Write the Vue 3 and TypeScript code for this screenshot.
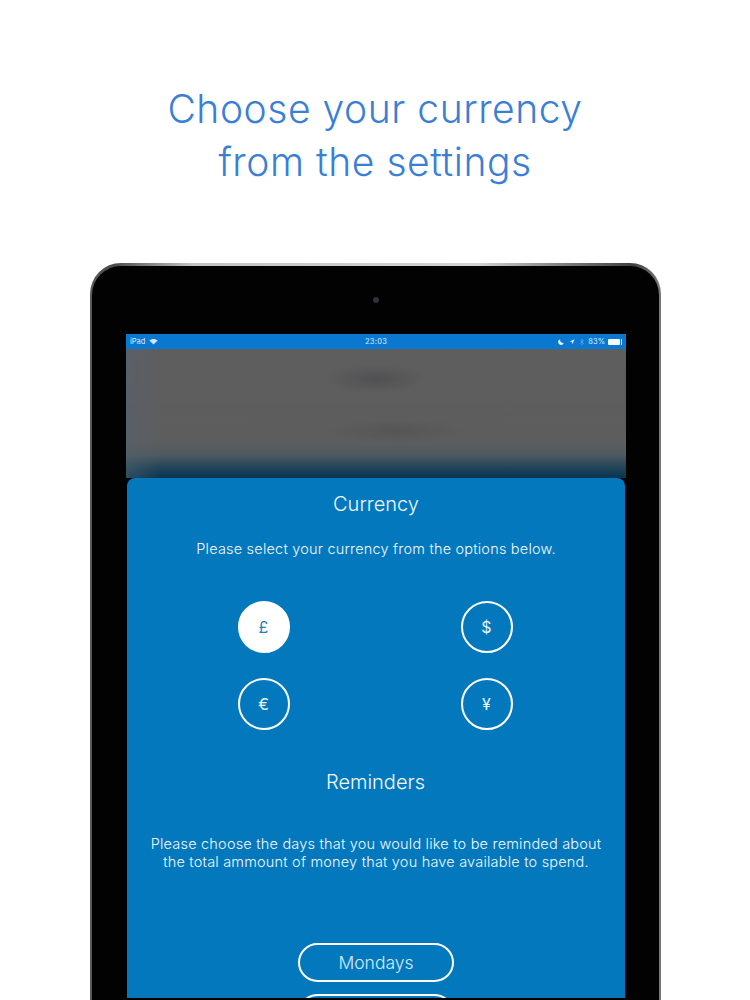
<script setup lang="ts">
const currencies = [
  { symbol: '£', active: true },
  { symbol: '$', active: false },
  { symbol: '€', active: false },
  { symbol: '¥', active: false },
]
</script>

<template>
  <main class="page">
    <h1 class="title">Choose your currency<br />from the settings</h1>
    <div class="device">
      <div class="bezel">
        <span class="camera"></span>
        <div class="screen">
          <div class="status">
            <div class="status-left">
              <span>iPad</span>
              <svg class="wifi" viewBox="0 0 12 9" aria-hidden="true">
                <path d="M6 8.6 0.4 3.2C3.6 0.3 8.4 0.3 11.6 3.2Z" fill="#cfe6f8" />
              </svg>
            </div>
            <span class="clock">23:03</span>
            <div class="status-right">
              <svg class="moon" viewBox="0 0 8 8" aria-hidden="true">
                <path d="M3 .4A3.8 3.8 0 1 0 7.6 5 3.6 3.6 0 0 1 3 .4Z" fill="#e8f3fc" />
              </svg>
              <svg class="arrow" viewBox="0 0 8 8" aria-hidden="true">
                <path d="M7.6.4 .4 3.6H4V7.4Z" fill="#e8f3fc" />
              </svg>
              <svg class="bt" viewBox="0 0 6 10" aria-hidden="true">
                <path d="M.6 2.8 5 6.8 3 9V1L5 3.2.6 7.2" fill="none" stroke="#7fb8e6" stroke-width=".8" />
              </svg>
              <span>83%</span>
              <span class="battery"><span class="charge"></span></span>
            </div>
          </div>
          <div class="backdrop"></div>
          <section class="sheet">
            <h2 class="heading">Currency</h2>
            <p class="copy">Please select your currency from the options below.</p>
            <div class="currencies">
              <button
                v-for="c in currencies"
                :key="c.symbol"
                class="currency"
                :class="{ active: c.active }"
                type="button"
              >{{ c.symbol }}</button>
            </div>
            <h2 class="heading reminders">Reminders</h2>
            <p class="copy long">Please choose the days that you would like to be reminded about<br />the total ammount of money that you have available to spend.</p>
            <button class="day" type="button">Mondays</button>
            <button class="day next" type="button" aria-hidden="true"></button>
          </section>
        </div>
      </div>
    </div>
  </main>
</template>

<style scoped>
.page {
  width: 750px;
  height: 1000px;
  overflow: hidden;
  background: #fff;
  font-family: Inter, "Liberation Sans", sans-serif;
  font-weight: 300;
}
.title {
  margin: 0;
  padding-top: 82px;
  height: 263px;
  box-sizing: border-box;
  text-align: center;
  color: #3a7fd5;
  font-size: 39px;
  line-height: 53px;
  font-weight: 300;
  letter-spacing: 0.55px;
}
.device {
  width: 571px;
  height: 800px;
  margin-left: 90px;
  box-sizing: border-box;
  padding: 3px 2px 0;
  background: linear-gradient(to right, #5c5c5e 0, #4a4a4c 4%, #c4c4c6 18%, #d2d2d4 68%, #77777a 84%, #3f3f41 95%, #7a7a7c 100%);
  border-radius: 31px 31px 0 0;
}
.bezel {
  position: relative;
  height: 100%;
  box-sizing: border-box;
  padding: 68px 0 0 34px;
  background: #020203;
  border-radius: 29px 29px 0 0;
}
.camera {
  position: absolute;
  top: 31px;
  left: 281px;
  width: 6px;
  height: 6px;
  border-radius: 50%;
  background: #2a323d;
}
.screen {
  width: 500px;
  height: 664px;
  overflow: hidden;
  display: flex;
  flex-direction: column;
}
.status {
  height: 15px;
  flex: none;
  background: #0a78d0;
  color: #dcecf9;
  font-size: 7.5px;
  font-weight: 400;
  display: grid;
  grid-template-columns: 1fr auto 1fr;
  align-items: center;
  padding: 0 4px;
  box-sizing: border-box;
}
.status-left,
.status-right {
  display: flex;
  align-items: center;
  gap: 4px;
}
.status-right {
  justify-content: flex-end;
  gap: 3px;
}
.clock {
  letter-spacing: 0.3px;
}
.wifi {
  width: 9px;
  height: 7px;
}
.moon,
.arrow {
  width: 6px;
  height: 6px;
  margin-right: 2px;
}
.bt {
  width: 4px;
  height: 8px;
  margin-right: 1px;
}
.battery {
  width: 14px;
  height: 6px;
  border-right: 1px solid #cfe6f8;
  display: block;
  box-sizing: border-box;
  padding-right: 1px;
}
.charge {
  display: block;
  height: 100%;
  background: #f4f9fd;
  border-radius: 1px;
}
.backdrop {
  height: 129px;
  flex: none;
  background:
    radial-gradient(ellipse 50px 14px at 250px 30px, rgba(70, 70, 72, 0.55), rgba(70, 70, 72, 0)),
    radial-gradient(ellipse 70px 12px at 270px 82px, rgba(74, 74, 76, 0.4), rgba(74, 74, 76, 0)),
    linear-gradient(to right, rgba(84, 98, 110, 0.5) 0, rgba(84, 98, 110, 0) 7%),
    linear-gradient(to bottom, #5f5e5f 0, #5d5d5e 72%, #4f5a60 82%, #1d4258 93%, #0a3550 100%);
}
.sheet {
  flex: 1;
  min-height: 0;
  margin: 0 1px;
  background: #0478bc;
  border-radius: 8px 8px 0 0;
  color: #f2f8fd;
  display: flex;
  flex-direction: column;
  align-items: center;
}
.heading {
  margin: 13px 0 0;
  font-size: 20px;
  line-height: 26px;
  font-weight: 300;
  flex: none;
}
.copy {
  margin: 23px 0 0;
  font-size: 14.5px;
  line-height: 18px;
  text-align: center;
  font-weight: 300;
  letter-spacing: 0.2px;
  white-space: nowrap;
  flex: none;
}
.currencies {
  margin: 43px 2px 0 0;
  flex: none;
  display: grid;
  grid-template-columns: 52px 52px;
  column-gap: 171px;
  row-gap: 25px;
}
.currency {
  width: 52px;
  height: 52px;
  padding: 0;
  box-sizing: border-box;
  border: 2.5px solid #fff;
  border-radius: 50%;
  background: transparent;
  color: #eef6fc;
  font: 400 16px Inter, "Liberation Sans", sans-serif;
}
.currency.active {
  background: #fff;
  color: #2a7fb8;
}
.reminders {
  margin: 39px 1px 0 0;
}
.long {
  margin-top: 40px;
}
.day {
  width: 156px;
  height: 39px;
  flex: none;
  padding: 0;
  box-sizing: border-box;
  border: 2.5px solid #fff;
  border-radius: 20px;
  background: transparent;
  color: #d8ebf8;
  font: 300 17.5px Inter, "Liberation Sans", sans-serif;
}
.long + .day {
  margin-top: 72px;
}
.day + .day {
  margin-top: 12px;
}
</style>
